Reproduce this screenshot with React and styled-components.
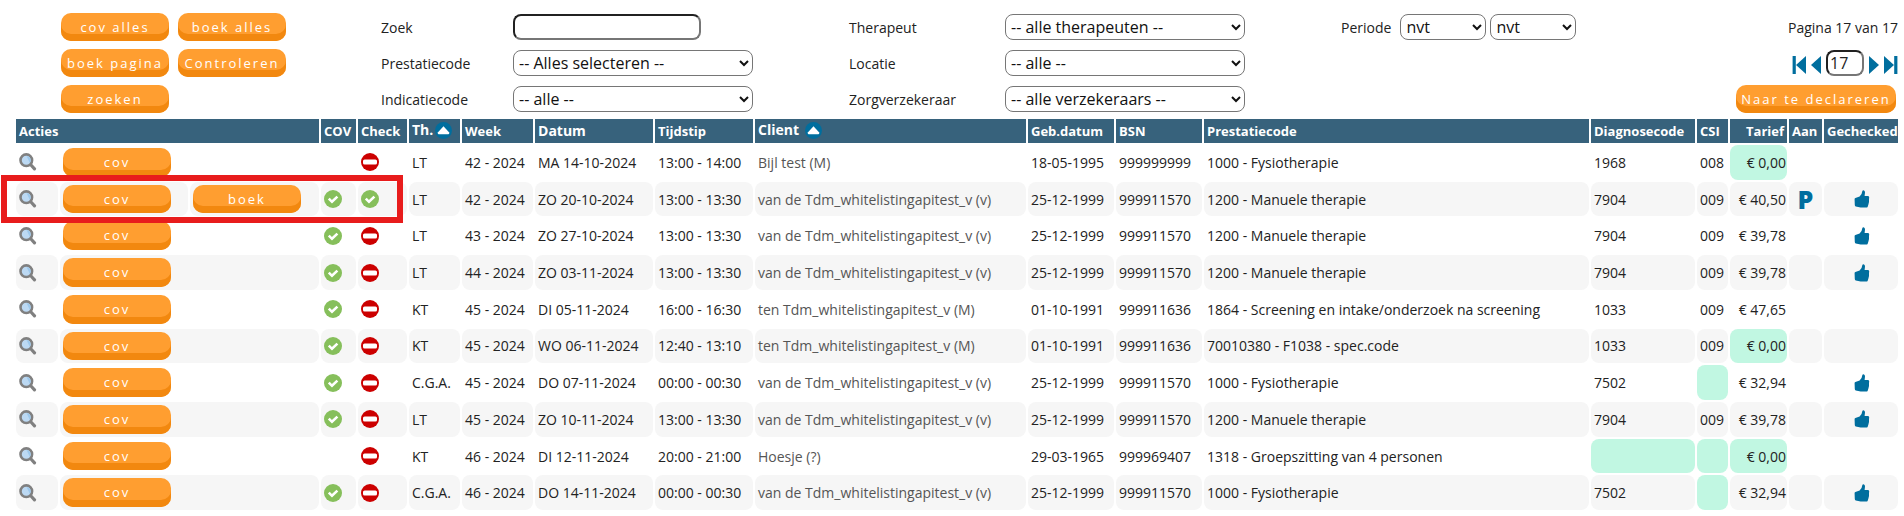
import React from "react";
import styled, { createGlobalStyle } from "styled-components";

const GlobalStyle = createGlobalStyle`
  body {
    margin: 0;
    background: white;
    color: #222;
    font-family: "Open Sans", "Liberation Sans", sans-serif;
    font-size: 14px;
  }
  input, select, button {
    box-sizing: border-box;
    font-family: inherit;
  }
`;

const Toolbar = styled.div`
  display: grid;
  grid-template-columns: 320fr 468fr 492fr 557fr;
  padding: 9px 6px 0 61px;
`;

const Actions = styled.div`
  display: grid;
  grid-template-columns: 108px 108px;
  grid-auto-rows: 36px;
  align-items: center;
  column-gap: 9px;
`;

const Fields = styled.div`
  display: grid;
  grid-template-columns: ${props => props.labelWidth}px 240px;
  grid-auto-rows: 36px;
  align-items: center;
`;

const PageFields = styled.div`
  display: flex;
  justify-content: space-between;
`;

const Period = styled.div`
  display: flex;
  align-items: center;
  height: 36px;
`;

const PeriodLabel = styled.label`
  margin-right: 9px;
`;

const Select = styled.select`
  width: ${props => props.width || 240}px;
  height: 26px;
  padding: 0 1px;
  border: 1px solid #767676;
  border-radius: 8px;
  background: white;
  color: #111;
  font-size: 16px;

  & + & {
    margin-left: 4px;
  }
`;

const TextInput = styled.input`
  width: ${props => props.width}px;
  height: 26px;
  padding: 0 2px 1px;
  border: 2px inset #767676;
  border-radius: 8px;
  background: white;
  color: #222;
  font-size: 16px;
`;

const Button = styled.button`
  width: ${props => props.width || 108}px;
  padding: 5px 0;
  border: 0;
  border-radius: 10px;
  background: #ff9e30;
  box-shadow: inset 0 -7px 0 #f2880f;
  color: white;
  font-size: 13px;
  line-height: 1.44;
  letter-spacing: 2px;
  white-space: nowrap;
  cursor: pointer;
`;

const Paging = styled.div`
  display: grid;
  grid-auto-rows: 36px;
  align-items: center;
  justify-items: end;
`;

const PagingAction = styled.div`
  padding-right: 2px;
`;

const Pager = styled.div`
  display: flex;
  align-items: center;
  gap: 5px;
`;

const PagerLink = styled.a`
  display: flex;
  padding-top: 4px;
  color: #006e9e;
`;

const TableWrap = styled.div`
  position: relative;
  padding: 0 4px 0 14px;
`;

const Table = styled.table`
  width: 100%;
  table-layout: fixed;
  border-collapse: separate;
  border-spacing: 2px;
`;

const Th = styled.th`
  height: 24px;
  padding: 0 3px;
  background: #37627c;
  color: white;
  font-size: ${props => (props.large ? 14 : 13)}px;
  line-height: 18px;
  text-align: ${props => props.align || "left"};
  white-space: nowrap;
`;

const SortLink = styled.a`
  display: flex;
  align-items: center;
  gap: ${props => props.gap}px;
  padding-bottom: 2px;
  color: white;
  text-decoration: none;
`;

const Td = styled.td`
  padding: 3px ${props => (props.align === "right" ? 1 : 3)}px 3px 3px;
  border-radius: 8px;
  text-align: ${props => props.align || "left"};
  white-space: nowrap;
`;

const Tr = styled.tr`
  &:nth-child(even) ${Td} {
    background: #f6f6f6;
  }
  & ${Td}[data-missing="true"] {
    background: #c1f7e2;
  }
`;

const IconLink = styled.a`
  display: flex;
`;

const Status = styled.span`
  display: flex;
`;

const Thumb = styled.span`
  display: flex;
  justify-content: center;
  padding-left: 2px;
`;

const ClientLink = styled.a`
  color: #555;
  text-decoration: none;
`;

const Aan = styled.span`
  display: block;
  color: #006e9e;
  font-size: 25px;
  font-weight: 800;
  line-height: 24px;
`;

const Highlight = styled.div`
  position: absolute;
  top: 58px;
  left: 1px;
  width: 402px;
  height: 48px;
  box-sizing: border-box;
  border: 6px solid #e81c1c;
  pointer-events: none;
`;

const SearchIcon = () => (
  <svg width="18" height="18" viewBox="0 0 18 18">
    <path d="M11.5 11.5 L15.5 15.8" stroke="#808080" strokeWidth="3.2" strokeLinecap="round" />
    <circle cx="7.3" cy="7.2" r="5.8" fill="#bcd9f3" stroke="#808080" strokeWidth="2.6" />
    <path d="M7.5 3 A4.3 4.3 0 0 1 10.8 9.8 Z" fill="#9cc8ec" />
  </svg>
);

const OkIcon = () => (
  <svg width="18" height="18" viewBox="0 0 18 18">
    <circle cx="9" cy="9" r="9" fill="#86bf5b" />
    <path d="M4.8 8.6 L8 11.8 L13.4 6.6" fill="none" stroke="white" strokeWidth="2.6" />
  </svg>
);

const BlockedIcon = () => (
  <svg width="18" height="18" viewBox="0 0 18 18">
    <circle cx="9" cy="9" r="9" fill="#cc0000" />
    <rect x="2" y="6.5" width="14" height="5" rx="1.6" fill="white" />
  </svg>
);

const SortIcon = () => (
  <svg width="17" height="17" viewBox="0 0 17 17">
    <circle cx="8.5" cy="8.5" r="8.5" fill="#006e9e" />
    <path d="M8.5 4.2 L14.2 10.6 Q14.6 12.2 13.4 12.2 H3.6 Q2.4 12.2 2.8 10.6 Z" fill="white" />
  </svg>
);

const ThumbIcon = () => (
  <svg width="16" height="18" viewBox="0 0 16 18">
    <path
      d="M0.6 9.2 Q0.4 8.2 1.4 8 L5.6 6.6 Q8 4.6 8.2 1.4 Q8.6 0 10 0.4 Q11 0.8 11 2.6 L10.6 6 H14 Q15.4 6.2 15.2 7.6 L15 9 L15 12 L14.4 14.6 L13.8 16.4 Q13.4 17.6 12 17.6 L6.6 17.6 L1.8 16.4 Q0.8 16.2 0.8 15 Z"
      fill="#006e9e"
    />
  </svg>
);

const StepIcon = ({ end, back }) => (
  <svg width={end ? 14 : 10} height="18" viewBox={end ? "0 0 14 18" : "0 0 10 18"}>
    <g transform={back ? `translate(${end ? 14 : 10} 0) scale(-1 1)` : undefined}>
      <path d="M0 0 L10 9 L0 18 Z" fill="currentColor" />
      {end && <rect x="10.2" width="3.2" height="18" fill="currentColor" />}
    </g>
  </svg>
);

const columns = [42, 128, 129, 35, 49, 51, 71, 118, 98, 271, 86, 86, null, 104, 31, 57, 33, 74];

const VD = "van de Tdm_whitelistingapitest_v (v)";
const TEN = "ten Tdm_whitelistingapitest_v (M)";

const rows = [
  { cov: false, th: "LT", week: "42 - 2024", datum: "MA 14-10-2024", tijd: "13:00 - 14:00", client: "Bijl test (M)", geb: "18-05-1995", bsn: "999999999", code: "1000 - Fysiotherapie", diagnose: "1968", csi: "008", tarief: "€ 0,00" },
  { cov: true, boek: true, th: "LT", week: "42 - 2024", datum: "ZO 20-10-2024", tijd: "13:00 - 13:30", client: VD, geb: "25-12-1999", bsn: "999911570", code: "1200 - Manuele therapie", diagnose: "7904", csi: "009", tarief: "€ 40,50", aan: "P", checked: true },
  { cov: true, th: "LT", week: "43 - 2024", datum: "ZO 27-10-2024", tijd: "13:00 - 13:30", client: VD, geb: "25-12-1999", bsn: "999911570", code: "1200 - Manuele therapie", diagnose: "7904", csi: "009", tarief: "€ 39,78", checked: true },
  { cov: true, th: "LT", week: "44 - 2024", datum: "ZO 03-11-2024", tijd: "13:00 - 13:30", client: VD, geb: "25-12-1999", bsn: "999911570", code: "1200 - Manuele therapie", diagnose: "7904", csi: "009", tarief: "€ 39,78", checked: true },
  { cov: true, th: "KT", week: "45 - 2024", datum: "DI 05-11-2024", tijd: "16:00 - 16:30", client: TEN, geb: "01-10-1991", bsn: "999911636", code: "1864 - Screening en intake/onderzoek na screening", diagnose: "1033", csi: "009", tarief: "€ 47,65" },
  { cov: true, th: "KT", week: "45 - 2024", datum: "WO 06-11-2024", tijd: "12:40 - 13:10", client: TEN, geb: "01-10-1991", bsn: "999911636", code: "70010380 - F1038 - spec.code", diagnose: "1033", csi: "009", tarief: "€ 0,00" },
  { cov: true, th: "C.G.A.", week: "45 - 2024", datum: "DO 07-11-2024", tijd: "00:00 - 00:30", client: VD, geb: "25-12-1999", bsn: "999911570", code: "1000 - Fysiotherapie", diagnose: "7502", csi: "", tarief: "€ 32,94", checked: true },
  { cov: true, th: "LT", week: "45 - 2024", datum: "ZO 10-11-2024", tijd: "13:00 - 13:30", client: VD, geb: "25-12-1999", bsn: "999911570", code: "1200 - Manuele therapie", diagnose: "7904", csi: "009", tarief: "€ 39,78", checked: true },
  { cov: false, th: "KT", week: "46 - 2024", datum: "DI 12-11-2024", tijd: "20:00 - 21:00", client: "Hoesje (?)", geb: "29-03-1965", bsn: "999969407", code: "1318 - Groepszitting van 4 personen", diagnose: "", csi: "", tarief: "€ 0,00" },
  { cov: true, th: "C.G.A.", week: "46 - 2024", datum: "DO 14-11-2024", tijd: "00:00 - 00:30", client: VD, geb: "25-12-1999", bsn: "999911570", code: "1000 - Fysiotherapie", diagnose: "7502", csi: "", tarief: "€ 32,94", checked: true }
];

const Row = ({ row }) => (
  <Tr>
    <Td>
      <IconLink href="#" aria-label="Bekijken">
        <SearchIcon />
      </IconLink>
    </Td>
    <Td colSpan={row.boek ? 1 : 2}>
      <Button type="button">cov</Button>
    </Td>
    {row.boek && (
      <Td>
        <Button type="button">boek</Button>
      </Td>
    )}
    <Td>
      <Status>{row.cov && <OkIcon />}</Status>
    </Td>
    <Td>
      <Status>{row.boek ? <OkIcon /> : <BlockedIcon />}</Status>
    </Td>
    <Td>{row.th}</Td>
    <Td>{row.week}</Td>
    <Td>{row.datum}</Td>
    <Td>{row.tijd}</Td>
    <Td>
      <ClientLink href="#">{row.client}</ClientLink>
    </Td>
    <Td>{row.geb}</Td>
    <Td>{row.bsn}</Td>
    <Td>{row.code}</Td>
    {/* empty codes and zero prices turn green */}
    <Td data-missing={!row.diagnose}>{row.diagnose}</Td>
    <Td data-missing={!row.csi}>{row.csi}</Td>
    <Td data-missing={row.tarief === "€ 0,00"} align="right">
      {row.tarief}
    </Td>
    <Td align="center">{row.aan && <Aan>{row.aan}</Aan>}</Td>
    <Td>
      <Thumb>{row.checked && <ThumbIcon />}</Thumb>
    </Td>
  </Tr>
);

const SelectField = ({ id, label, value }) => (
  <>
    <label htmlFor={id}>{label}</label>
    <Select id={id}>
      <option>{value}</option>
    </Select>
  </>
);

export default () => {
  return (
    <>
      <GlobalStyle />
      <Toolbar>
        <Actions>
          <Button type="button">cov alles</Button>
          <Button type="button">boek alles</Button>
          <Button type="button">boek pagina</Button>
          <Button type="button">Controleren</Button>
          <Button type="button">zoeken</Button>
        </Actions>
        <Fields labelWidth={132}>
          <label htmlFor="zoek">Zoek</label>
          <TextInput id="zoek" type="text" width={188} />
          <SelectField id="prestatiecode" label="Prestatiecode" value="-- Alles selecteren --" />
          <SelectField id="indicatiecode" label="Indicatiecode" value="-- alle --" />
        </Fields>
        <Fields labelWidth={156}>
          <SelectField id="therapeut" label="Therapeut" value="-- alle therapeuten --" />
          <SelectField id="locatie" label="Locatie" value="-- alle --" />
          <SelectField id="verzekeraar" label="Zorgverzekeraar" value="-- alle verzekeraars --" />
        </Fields>
        <PageFields>
          <Period>
            <PeriodLabel htmlFor="periode">Periode</PeriodLabel>
            <Select id="periode" width={86}>
              <option>nvt</option>
            </Select>
            <Select width={86} aria-label="Periode tot">
              <option>nvt</option>
            </Select>
          </Period>
          <Paging>
            <span>Pagina 17 van 17</span>
            <Pager>
              <PagerLink href="#" aria-label="Eerste pagina">
                <StepIcon end back />
              </PagerLink>
              <PagerLink href="#" aria-label="Vorige pagina">
                <StepIcon back />
              </PagerLink>
              <TextInput type="text" width={38} defaultValue="17" aria-label="Pagina" />
              <PagerLink href="#" aria-label="Volgende pagina">
                <StepIcon />
              </PagerLink>
              <PagerLink href="#" aria-label="Laatste pagina">
                <StepIcon end />
              </PagerLink>
            </Pager>
            <PagingAction>
              <Button type="button" width={160}>
                Naar te declareren
              </Button>
            </PagingAction>
          </Paging>
        </PageFields>
      </Toolbar>
      <TableWrap>
        <Table>
          <colgroup>
            {columns.map((width, i) => (
              <col key={i} width={width || undefined} />
            ))}
          </colgroup>
          <thead>
            <tr>
              <Th colSpan={3}>Acties</Th>
              <Th>COV</Th>
              <Th>Check</Th>
              <Th large>
                <SortLink href="#" gap={2}>
                  Th. <SortIcon />
                </SortLink>
              </Th>
              <Th>Week</Th>
              <Th large>Datum</Th>
              <Th>Tijdstip</Th>
              <Th large>
                <SortLink href="#" gap={6}>
                  Client <SortIcon />
                </SortLink>
              </Th>
              <Th>Geb.datum</Th>
              <Th>BSN</Th>
              <Th>Prestatiecode</Th>
              <Th>Diagnosecode</Th>
              <Th>CSI</Th>
              <Th align="right">Tarief</Th>
              <Th>Aan</Th>
              <Th>Gechecked</Th>
            </tr>
          </thead>
          <tbody>
            {rows.map((row, i) => (
              <Row key={i} row={row} />
            ))}
          </tbody>
        </Table>
        <Highlight />
      </TableWrap>
    </>
  );
};
